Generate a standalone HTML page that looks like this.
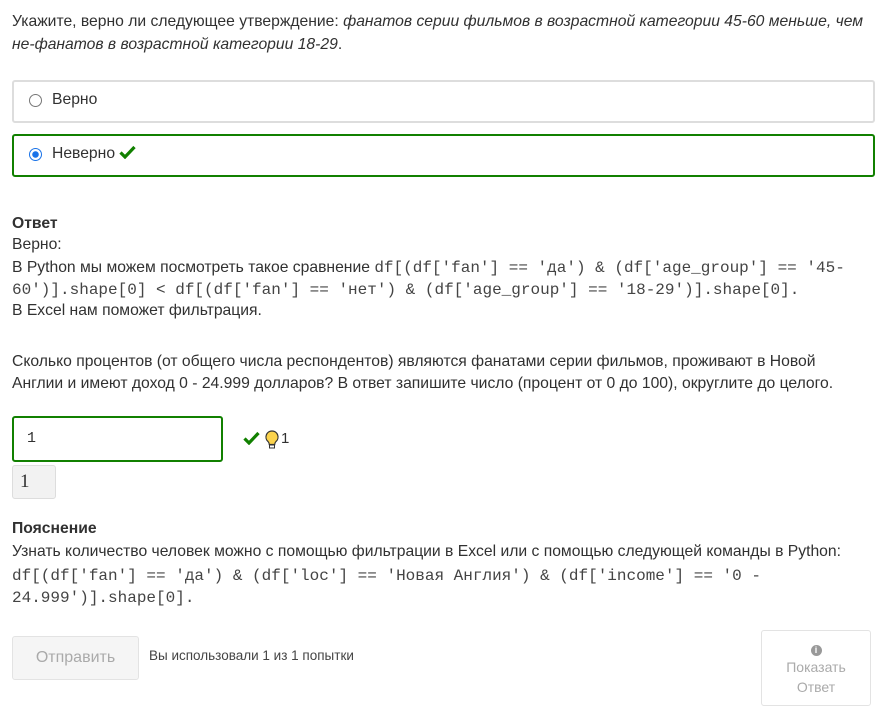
<!DOCTYPE html>
<html><head><meta charset="utf-8"><style>
body{margin:0;width:886px;height:712px;background:#fff;font-family:"Liberation Sans","DejaVu Sans",sans-serif;color:#313131;position:relative;overflow:hidden}
.t{position:absolute;left:12px;white-space:nowrap;font-size:15.7px;line-height:20px}
.m{font-family:"Liberation Mono",monospace;font-size:16px;color:#444}
.box{position:absolute;left:12px;width:859px;border:2px solid #ddd;border-radius:3px;height:39px}
.radio{position:absolute;left:15px;top:12px;width:11px;height:11px;border:1px solid #777;border-radius:50%}
.lbl{position:absolute;left:38px;top:9px;font-size:15.7px}
</style></head><body>
<div class="t" style="top:12px">Укажите, верно ли следующее утверждение: <i>фанатов серии фильмов в возрастной категории 45-60 меньше, чем</i></div>
<div class="t" style="top:35px"><i>не-фанатов в возрастной категории 18-29</i>.</div>
<div class="box" style="top:80px"><div class="radio"></div><div class="lbl">Верно</div></div>
<div class="box" style="top:134px;border-color:#118000"><div class="radio" style="border:1px solid #1a73e8;background:radial-gradient(circle,#1a73e8 3px,#fff 3.5px)"></div><div class="lbl">Неверно <svg width="17" height="14" viewBox="0 0 17 14" style="vertical-align:-1px"><path d="M1.5 7.5l4.5 4.5 9.5-10" fill="none" stroke="#118000" stroke-width="3.2"/></svg></div></div>
<div class="t" style="top:214px;font-weight:bold">Ответ</div>
<div class="t" style="top:235px">Верно:</div>
<div class="t" style="top:258px">В Python мы можем посмотреть такое сравнение <span class="m">df[(df['fan'] == 'да') &amp; (df['age_group'] == '45-</span></div>
<div class="t" style="top:280px"><span class="m">60')].shape[0] &lt; df[(df['fan'] == 'нет') &amp; (df['age_group'] == '18-29')].shape[0].</span></div>
<div class="t" style="top:301px">В Excel нам поможет фильтрация.</div>
<div class="t" style="top:352px">Сколько процентов (от общего числа респондентов) являются фанатами серии фильмов, проживают в Новой</div>
<div class="t" style="top:374px">Англии и имеют доход 0 - 24.999 долларов? В ответ запишите число (процент от 0 до 100), округлите до целого.</div>
<div style="position:absolute;left:12px;top:416px;width:207px;height:42px;border:2px solid #118000;border-radius:3px"><span style="position:absolute;left:13px;top:12px;font-family:'Liberation Mono',monospace;font-size:15px">1</span></div>
<svg style="position:absolute;left:243px;top:431px" width="17" height="14" viewBox="0 0 17 14"><path d="M1.5 7.5l4.5 4.5 9.5-10" fill="none" stroke="#118000" stroke-width="3.2"/></svg>
<svg style="position:absolute;left:265px;top:430px" width="14" height="20" viewBox="0 0 14 20"><path d="M7 1a6 6 0 0 0-4 10.5c1 1 1.3 2 1.3 3h5.4c0-1 .3-2 1.3-3A6 6 0 0 0 7 1z" fill="#fbd34d" stroke="#333" stroke-width="1.2"/><rect x="4.5" y="15" width="5" height="3" fill="#fff" stroke="#333"/></svg>
<div style="position:absolute;left:281px;top:430px;font-size:15px">1</div>
<div style="position:absolute;left:12px;top:465px;width:42px;height:32px;background:#f2f2f2;border:1px solid #ddd;border-radius:3px"><span style="position:absolute;left:7px;top:5px;font-family:'Liberation Serif',serif;font-size:19px">1</span></div>
<div class="t" style="top:519px;font-weight:bold">Пояснение</div>
<div class="t" style="top:542px">Узнать количество человек можно с помощью фильтрации в Excel или с помощью следующей команды в Python:</div>
<div class="t" style="top:566px"><span class="m">df[(df['fan'] == 'да') &amp; (df['loc'] == 'Новая Англия') &amp; (df['income'] == '0 -</span></div>
<div class="t" style="top:588px"><span class="m">24.999')].shape[0].</span></div>
<div style="position:absolute;left:12px;top:636px;width:125px;height:42px;background:#f5f5f5;border:1px solid #e3e3e3;border-radius:3px;color:#aaa;font-size:16px;text-align:center;line-height:42px">Отправить</div>
<div style="position:absolute;left:149px;top:648px;font-size:13.5px;color:#444">Вы использовали 1 из 1 попытки</div>
<div style="position:absolute;left:761px;top:630px;width:108px;height:74px;border:1px solid #e3e3e3;border-radius:3px;text-align:center;color:#aaa;font-size:14px;line-height:20px"><div style="margin-top:10px;font-size:12px;line-height:16px"><span style="display:inline-block;width:11px;height:11px;border-radius:50%;background:#999;color:#fff;font-size:9px;line-height:11px;font-weight:bold">i</span></div>Показать<br>Ответ</div>
</body></html>
